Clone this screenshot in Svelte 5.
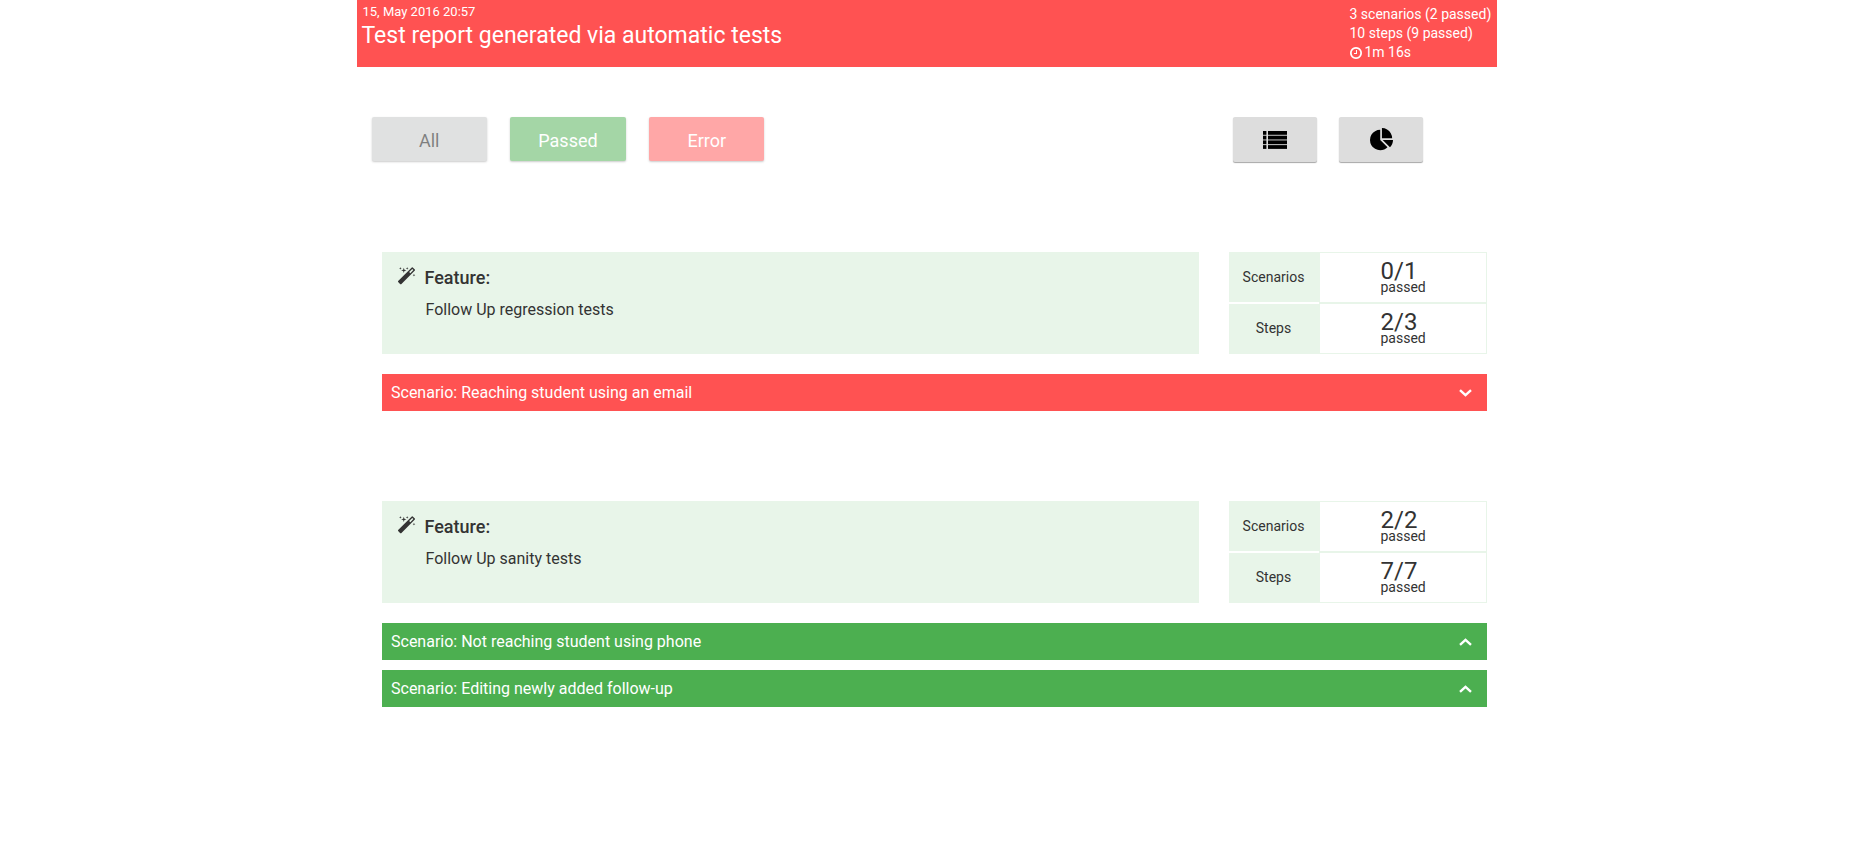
<script>
  const features = [
    {
      name: 'Follow Up regression tests',
      stats: [['Scenarios', '0/1'], ['Steps', '2/3']],
      scenarios: [{ title: 'Reaching student using an email', failed: true }]
    },
    {
      name: 'Follow Up sanity tests',
      stats: [['Scenarios', '2/2'], ['Steps', '7/7']],
      scenarios: [
        { title: 'Not reaching student using phone', failed: false },
        { title: 'Editing newly added follow-up', failed: false }
      ]
    }
  ];
</script>

<div class="page">
  <header class="header">
    <div class="head-left">
      <div class="date">15, May 2016 20:57</div>
      <div class="title">Test report generated via automatic tests</div>
    </div>
    <div class="head-right">
      <div>3 scenarios (2 passed)</div>
      <div>10 steps (9 passed)</div>
      <div class="dur">
        <svg class="clock" viewBox="0 0 1792 1792" fill="currentColor"><path d="M1024 544v448q0 14-9 23t-23 9h-320q-14 0-23-9t-9-23v-64q0-14 9-23t23-9h224v-352q0-14 9-23t23-9h64q14 0 23 9t9 23zm416 352q0-148-73-273t-198-198-273-73-273 73-198 198-73 273 73 273 198 198 273 73 273-73 198-198 73-273zm224 0q0 209-103 385.500t-279.500 279.500-385.500 103-385.500-103-279.500-279.500-103-385.500 103-385.500 279.500-279.500 385.500-103 385.500 103 279.500 279.500 103 385.500z"/></svg>
        <span>1m 16s</span>
      </div>
    </div>
  </header>

  <div class="controls">
    <button class="filter all">All</button>
    <button class="filter passed">Passed</button>
    <button class="filter error">Error</button>
    <button class="view first" aria-label="List view">
      <svg class="list" viewBox="0 0 24 18" fill="#000">
        <rect x="0" y="0" width="3.4" height="3.8"/><rect x="5" y="0" width="19" height="3.8"/>
        <rect x="0" y="4.7" width="3.4" height="3.8"/><rect x="5" y="4.7" width="19" height="3.8"/>
        <rect x="0" y="9.4" width="3.4" height="3.8"/><rect x="5" y="9.4" width="19" height="3.8"/>
        <rect x="0" y="14.1" width="3.4" height="3.8"/><rect x="5" y="14.1" width="19" height="3.8"/>
      </svg>
    </button>
    <button class="view" aria-label="Chart view">
      <svg class="pie" viewBox="0 0 1728 1792" fill="#000"><path d="M768 890l546 546q-106 108-247.500 168t-298.500 60q-209 0-385.500-103t-279.500-279.500-103-385.500 103-385.500 279.500-279.500 385.500-103v762zm187 6h773q0 157-60 298.500t-168 247.500zm709-128h-768v-768q209 0 385.500 103t279.500 279.500 103 385.500z"/></svg>
    </button>
  </div>

  {#each features as f}
    <section class="feature">
      <div class="top">
        <div class="panel">
          <svg class="wand" viewBox="0 0 1792 1792" fill="#333"><path d="M1254 581l293-293-107-107-293 293zm447-293q0 27-18 45l-1286 1286q-18 18-45 18t-45-18l-198-198q-18-18-18-45t18-45l1286-1286q18-18 45-18t45 18l198 198q18 18 18 45zm-1351-190l98 30-98 30-30 98-30-98-98-30 98-30 30-98zm350 162l196 60-196 60-60 196-60-196-196-60 196-60 60-196zm930 478l98 30-98 30-30 98-30-98-98-30 98-30 30-98zm-640-640l98 30-98 30-30 98-30-98-98-30 98-30 30-98z"/></svg>
          <div class="ptext">
            <div class="flabel">Feature:</div>
            <div class="fname">{f.name}</div>
          </div>
        </div>
        <div class="stats">
          {#each f.stats as [label, value]}
            <div class="row">
              <div class="slabel">{label}</div>
              <div class="svalue">
                <div class="inner">
                  <div class="num">{value}</div>
                  <div class="cap">passed</div>
                </div>
              </div>
            </div>
          {/each}
        </div>
      </div>
      {#each f.scenarios as s}
        <div class="scenario" class:failed={s.failed}>
          <span>Scenario: {s.title}</span>
          <svg class="chev" viewBox="0 0 13 8" fill="none" stroke="#fff" stroke-width="2.4">
            {#if s.failed}
              <polyline points="1,1.2 6.500,6.200 12,1.200"/>
            {:else}
              <polyline points="1,6.800 6.500,1.800 12,6.800"/>
            {/if}
          </svg>
        </div>
      {/each}
    </section>
  {/each}
</div>

<style>
  :global(body) {
    margin: 0;
    background: #fff;
    font-family: Roboto, "Liberation Sans", sans-serif;
    color: #333;
  }
  .page { width: 1140px; margin: 0 auto; }

  .header {
    height: 67px;
    background: #ff5252;
    color: #fff;
    display: flex;
    justify-content: space-between;
    padding: 0 6px 0 5px;
    box-sizing: border-box;
  }
  .date { font-size: 13px; line-height: 15px; padding: 4px 0 0 1px; }
  .title { font-size: 23px; line-height: 30px; margin-top: 2px; }
  .head-right { width: 141px; font-size: 14px; line-height: 19px; padding-top: 5px; white-space: nowrap; }
  .dur { display: flex; align-items: center; gap: 2px; }
  .clock { width: 14px; height: 14px; margin-left: -1px; }

  .controls {
    display: flex;
    align-items: flex-start;
    padding: 50px 0 0 15px;
    height: 46px;
  }
  button {
    border: 0;
    border-radius: 2px;
    font: inherit;
    padding: 0;
  }
  .filter {
    width: 115.400px;
    height: 44px;
    margin-right: 23.400px;
    padding-top: 2px;
    font-size: 18px;
    color: #fff;
    opacity: 0.5;
    box-shadow: 0 1px 2px rgba(0, 0, 0, 0.4);
  }
  .all { background: #c2c5c4; color: #000; }
  .passed { background: #4caf50; }
  .error { background: #ff5252; }
  .view {
    width: 83.400px;
    height: 45px;
    margin-right: 22.600px;
    background: #ddd;
    box-shadow: 0 1px 1px rgba(0, 0, 0, 0.35);
    display: flex;
    align-items: center;
    justify-content: center;
  }
  .first { margin-left: 445.600px; }
  .list { width: 24px; height: 18px; }
  .pie { width: 23px; height: 24px; }

  .feature { padding: 0 10px 0 25px; height: 249px; box-sizing: border-box; }
  .feature:first-of-type { margin-top: 89px; }
  .top { display: flex; justify-content: space-between; height: 102px; margin-bottom: 20px; }
  .panel {
    width: 817px;
    background: #e8f5e9;
    display: flex;
    box-sizing: border-box;
    padding: 14px 0 0 15px;
  }
  .wand { width: 19px; height: 19px; margin: 1px 10px 0 0; }
  .flabel { font-size: 18px; font-weight: 500; line-height: 20px; margin: 2px 0 0 -1px; }
  .fname { font-size: 16px; line-height: 20px; margin-top: 12px; }

  .stats { width: 258px; display: flex; flex-direction: column; }
  .row { display: flex; height: 51px; }
  .slabel {
    width: 90px;
    margin: 0 0 1px;
    background: #e8f5e9;
    font-size: 14px;
    display: flex;
    align-items: center;
    justify-content: center;
  }
  .row:last-child .slabel { margin: 1px 0 0; padding-bottom: 2px; box-sizing: border-box; }
  .svalue {
    flex: 1;
    border: 1px solid #e8f5e9;
    display: flex;
    justify-content: center;
  }
  .inner { width: 46px; margin-left: 2px; white-space: nowrap; }
  .num { font-size: 24px; line-height: 18px; padding-top: 9px; }
  .cap { font-size: 14px; line-height: 14px; }

  .scenario {
    height: 37px;
    margin-bottom: 10px;
    background: #4caf50;
    color: #fff;
    font-size: 16px;
    display: flex;
    align-items: center;
    justify-content: space-between;
    padding: 0 15px 0 9.500px;
  }
  .scenario.failed { background: #ff5252; }
  .chev { width: 13px; height: 8px; }
</style>
